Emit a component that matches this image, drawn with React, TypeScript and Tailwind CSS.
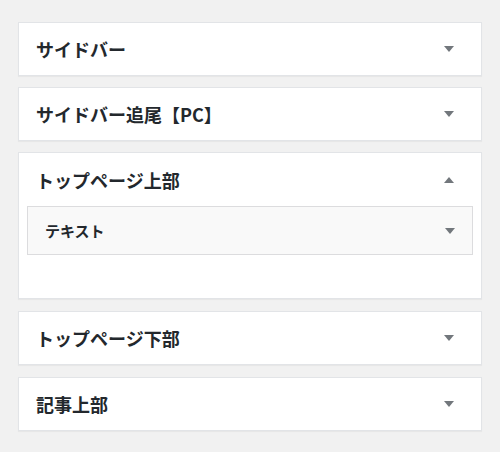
import React from 'react';

const font = { fontFamily: '"Noto Sans CJK JP", "Noto Sans", sans-serif' };

const Arrow = ({ up = false }: { up?: boolean }) => (
    <svg width="10" height="6" viewBox="0 0 10 6" className="shrink-0">
        <polygon points={up ? '0,6 10,6 5,0' : '0,0 10,0 5,6'} fill="#72777c" />
    </svg>
);

const Section = ({ title }: { title: string }) => (
    <div className="bg-white border border-[#e2e4e7] shadow-[0_1px_1px_rgba(0,0,0,0.04)]">
        <div className="h-[52px] flex items-center justify-between pl-[17px] pr-[27px]">
            <span className="text-[18px] font-bold text-[#23282d] leading-none">{title}</span>
            <Arrow />
        </div>
    </div>
);

export default function App() {
    return (
        <div className="w-[500px] h-[452px] bg-[#f1f1f1] pt-[22px] px-[18px]" style={font}>
            <div className="flex flex-col gap-[11px]">
                <Section title="サイドバー" />
                <Section title="サイドバー追尾【PC】" />
                <div className="bg-white border border-[#e2e4e7] shadow-[0_1px_1px_rgba(0,0,0,0.04)] pb-[43px]">
                    <div className="h-[53px] flex items-center justify-between pl-[17px] pr-[27px]">
                        <span className="text-[18px] font-bold text-[#23282d] leading-none">トップページ上部</span>
                        <Arrow up />
                    </div>
                    <div className="mx-[8px] h-[49px] bg-[#f9f9f9] border border-[#dcdcde] flex items-center justify-between pl-[17px] pr-[17px]">
                        <span className="text-[15px] font-bold text-[#23282d] leading-none">テキスト</span>
                        <Arrow />
                    </div>
                </div>
                <div className="mt-[1px]">
                    <Section title="トップページ下部" />
                </div>
                <div className="mt-[1px]">
                    <Section title="記事上部" />
                </div>
            </div>
        </div>
    );
}
